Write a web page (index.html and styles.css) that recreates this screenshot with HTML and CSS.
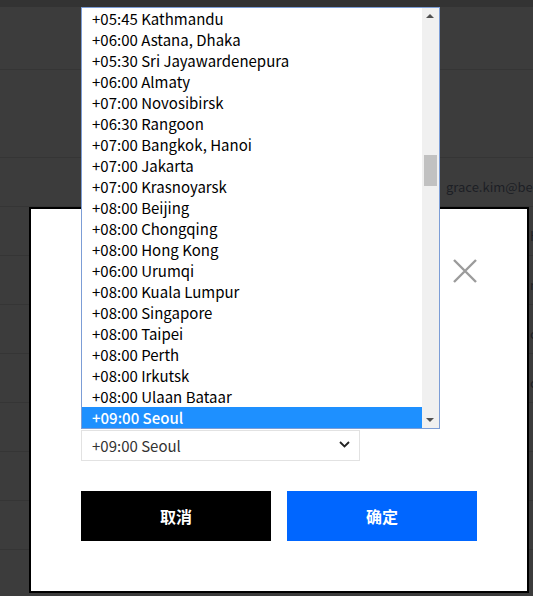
FILE: index.html
```html
<!DOCTYPE html>
<html lang="zh-CN">
<head>
<meta charset="utf-8">
<title>时区设置</title>
<link rel="stylesheet" href="styles.css">
</head>
<body>
  <div class="backdrop">
    <div class="topbar"></div>
    <div class="row row-head"></div>
    <div class="row row-tall"></div>
    <div class="row"><span class="cell"></span><span class="cell cell-wide">grace.kim@bestcorp.com</span></div>
    <div class="row"><span class="cell"></span><span class="cell"></span><span class="cell">Han</span></div>
    <div class="row"><span class="cell"></span><span class="cell"></span><span class="cell">mem</span></div>
    <div class="row"><span class="cell"></span><span class="cell"></span><span class="cell">con</span></div>
    <div class="row"><span class="cell"></span><span class="cell"></span><span class="cell">con</span></div>
    <div class="row"></div>
    <div class="row"></div>
    <div class="row"></div>
  </div>

  <div class="modal">
    <div class="modal-head">
      <button class="close-btn" aria-label="关闭">
        <svg width="24" height="24" viewBox="0 0 24 24"><path d="M1 1 L23 23 M23 1 L1 23" stroke="#9b9b9b" stroke-width="2.4" fill="none"/></svg>
      </button>
    </div>
    <div class="field">
      <div class="select-box">
        <span>+09:00 Seoul</span>
        <svg class="chev" width="11" height="7" viewBox="0 0 11 7"><path d="M1 1 L5.5 5.5 L10 1" stroke="#222" stroke-width="1.8" fill="none"/></svg>
      </div>
    </div>
    <div class="actions">
      <button class="btn btn-cancel">取消</button>
      <button class="btn btn-ok">确定</button>
    </div>
  </div>

  <div class="listbox">
    <ul class="options">
      <li>+05:45 Kathmandu</li>
      <li>+06:00 Astana, Dhaka</li>
      <li>+05:30 Sri Jayawardenepura</li>
      <li>+06:00 Almaty</li>
      <li>+07:00 Novosibirsk</li>
      <li>+06:30 Rangoon</li>
      <li>+07:00 Bangkok, Hanoi</li>
      <li>+07:00 Jakarta</li>
      <li>+07:00 Krasnoyarsk</li>
      <li>+08:00 Beijing</li>
      <li>+08:00 Chongqing</li>
      <li>+08:00 Hong Kong</li>
      <li>+06:00 Urumqi</li>
      <li>+08:00 Kuala Lumpur</li>
      <li>+08:00 Singapore</li>
      <li>+08:00 Taipei</li>
      <li>+08:00 Perth</li>
      <li>+08:00 Irkutsk</li>
      <li>+08:00 Ulaan Bataar</li>
      <li class="selected">+09:00 Seoul</li>
    </ul>
    <div class="scrollbar">
      <span class="arrow up"></span>
      <span class="thumb"></span>
      <span class="arrow down"></span>
    </div>
  </div>
</body>
</html>
```

FILE: styles.css
```css
* { box-sizing: border-box; }

html, body {
  margin: 0;
  padding: 0;
  width: 533px;
  height: 596px;
  overflow: hidden;
  background: #3c3c3c;
  font-family: "Noto Sans CJK SC", "Noto Sans", sans-serif;
}

.backdrop {
  display: flex;
  flex-direction: column;
  width: 533px;
  overflow: hidden;
}

.topbar {
  height: 7px;
  background: #333333;
}

.row {
  height: 49px;
  border-bottom: 1px solid #353535;
  display: grid;
  grid-template-columns: 446px 84px 3px;
  align-items: center;
  color: #1c1f25;
  font-size: 13px;
  white-space: nowrap;
}

.row-head { height: 63px; }
.row-tall { height: 88px; }

.cell {
  padding-top: 8px;
  overflow: hidden;
}

.cell-wide { grid-column: 2 / 4; }

.modal {
  position: absolute;
  left: 29px;
  top: 207px;
  width: 500px;
  height: 386px;
  background: #fff;
  border: 2px solid #000;
  padding: 50px;
  display: flex;
  flex-direction: column;
}

.modal-head {
  height: 24px;
  display: flex;
  justify-content: flex-end;
  align-items: center;
}

.close-btn {
  width: 24px;
  height: 24px;
  padding: 0;
  border: 0;
  background: none;
  display: block;
}
.close-btn svg { display: block; }

.field {
  margin-top: 147px;
}

.select-box {
  width: 279px;
  height: 31px;
  border: 1px solid #e2e2e2;
  display: flex;
  align-items: center;
  justify-content: space-between;
  padding: 0 9px 0 10px;
  font-size: 15px;
  color: #333;
}

.chev { display: block; margin-top: -2px; }

.actions {
  margin-top: 30px;
  display: flex;
  gap: 16px;
}

.btn {
  width: 190px;
  height: 50px;
  border: 0;
  color: #fff;
  font-family: "Noto Sans CJK SC", sans-serif;
  font-size: 16px;
  font-weight: 700;
  padding: 0;
}

.btn-cancel { background: #000; }
.btn-ok { background: #0066ff; }

/* open dropdown list */
.listbox {
  position: absolute;
  left: 81px;
  top: 7px;
  width: 359px;
  height: 422px;
  border: 1px solid #7c9dd6;
  background: #fff;
  display: flex;
}

.options {
  list-style: none;
  margin: 0;
  padding: 0;
  flex: 1;
}

.options li {
  height: 21px;
  line-height: 21px;
  padding-left: 10px;
  font-size: 15px;
  color: #000;
  white-space: nowrap;
}

.options li.selected {
  background: #1e90ff;
  color: #fff;
  font-weight: 500;
}

.scrollbar {
  width: 17px;
  background: #f0f0f0;
  position: relative;
}

.thumb {
  position: absolute;
  left: 2px;
  top: 147px;
  width: 13px;
  height: 31px;
  background: #c1c1c1;
}

.arrow {
  position: absolute;
  left: 4px;
  width: 0;
  height: 0;
  border-left: 4px solid transparent;
  border-right: 4px solid transparent;
}

.arrow.up {
  top: 6px;
  border-bottom: 4px solid #505050;
}

.arrow.down {
  bottom: 6px;
  border-top: 4px solid #505050;
}
```
